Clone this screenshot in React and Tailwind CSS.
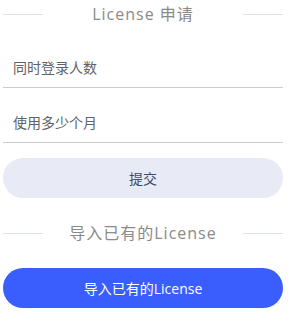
export default function App() {
  const font = { fontFamily: '"Open Sans", "Noto Sans CJK SC", sans-serif' };
  return (
    <div className="w-[289px] h-[316px] bg-white" style={font}>
      <div className="ml-[3px] w-[280px] flex flex-col">
        <div className="h-[28px] flex items-center">
          <div className="w-[40px] h-px bg-[#dce2e9]" />
          <div className="flex-1 text-center text-[16px] tracking-[1px] text-[#8a8a8a] leading-none">License 申请</div>
          <div className="w-[40px] h-px bg-[#dce2e9]" />
        </div>
        <div className="mt-[20px] h-[40px] border-b border-[#cccccc] flex items-center pl-[10px] text-[14px] text-[#606266]">同时登录人数</div>
        <div className="mt-[15px] h-[40px] border-b border-[#cccccc] flex items-center pl-[10px] text-[14px] text-[#606266]">使用多少个月</div>
        <div className="mt-[15px] h-[40px] rounded-full bg-[#e8ebf5] flex items-center justify-center text-[14px] text-[#3d4a6a]">提交</div>
        <div className="mt-[21px] h-[28px] flex items-center">
          <div className="w-[40px] h-px bg-[#dce2e9]" />
          <div className="flex-1 text-center text-[16px] tracking-[1px] text-[#8a8a8a] leading-none">导入已有的License</div>
          <div className="w-[40px] h-px bg-[#dce2e9]" />
        </div>
        <div className="mt-[21px] h-[40px] rounded-full bg-[#3a5efd] flex items-center justify-center text-[14px] text-white">导入已有的License</div>
      </div>
    </div>
  );
}
